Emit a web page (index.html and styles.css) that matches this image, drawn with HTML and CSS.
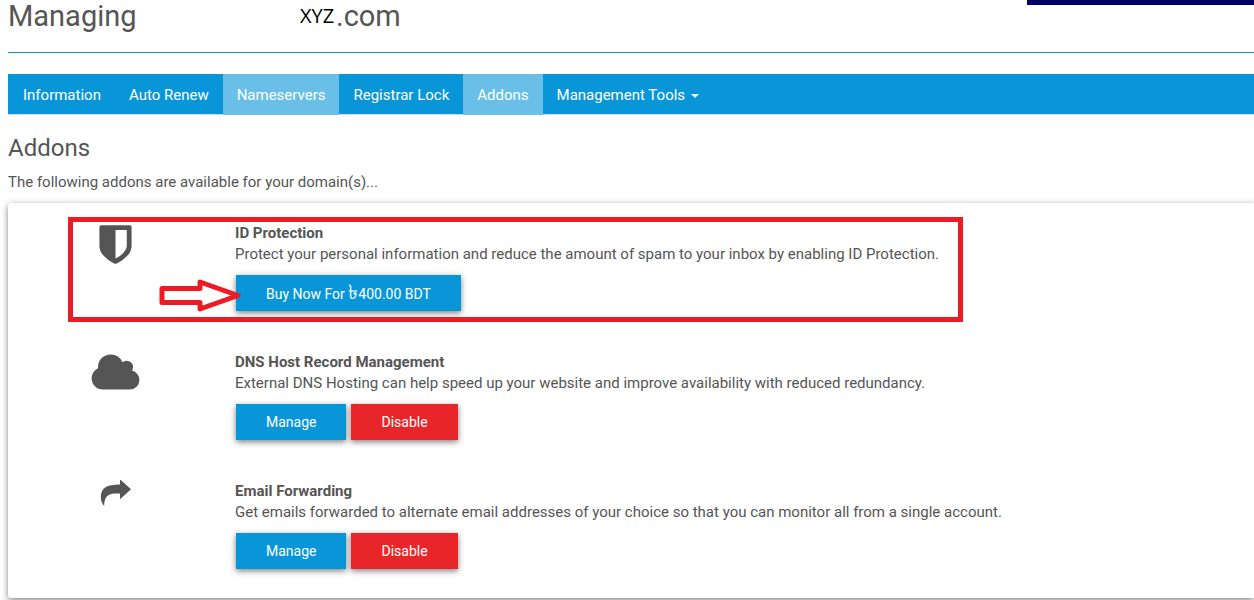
FILE: index.html
```html
<!DOCTYPE html>
<html lang="en">

<head>
    <meta charset="UTF-8">
    <meta name="viewport" content="width=device-width, initial-scale=1.0">
    <title>Domain Addons</title>
    <link rel="stylesheet" href="styles.css">
</head>

<body>
    <div class="strip"></div>
    <div class="page">
        <h1><span class="managing">Managing</span><span class="domain">XYZ</span><span>.com</span></h1>

        <nav class="tabs">
            <a href="#">Information</a>
            <a href="#">Auto Renew</a>
            <a href="#" class="current">Nameservers</a>
            <a href="#">Registrar Lock</a>
            <a href="#" class="current">Addons</a>
            <a href="#">Management Tools <span class="caret"></span></a>
        </nav>

        <h2>Addons</h2>
        <p class="intro">The following addons are available for your domain(s)...</p>

        <div class="card">
            <div class="addon">
                <div class="icon">
                    <svg width="45" height="45" viewBox="0 0 1792 1792">
                        <path d="M1344 960v-640h-448v1137q119-63 213-137 235-184 235-360zm192-768v768q0 86-33.5 170.5t-83 150-118 127.5-126.5 103-121 77.5-89.5 49.5-42.5 20q-12 6-26 6t-26-6q-16-7-42.5-20t-89.5-49.5-121-77.5-126.5-103-118-127.5-83-150-33.5-170.5v-768q0-26 19-45t45-19h1152q26 0 45 19t19 45z"/>
                    </svg>
                </div>
                <div class="info">
                    <h3>ID Protection</h3>
                    <p>Protect your personal information and reduce the amount of spam to your inbox by enabling ID Protection.</p>
                    <div class="buttons">
                        <button type="button" class="btn">Buy Now For <span class="taka">৳</span>400.00 BDT</button>
                    </div>
                </div>
                <!-- highlight frame and arrow -->
                <div class="frame"></div>
                <svg class="arrow" width="82" height="34" viewBox="0 0 82 34">
                    <path d="M3 9.500H41V3L79 16.500L41 30V23.500H3Z"/>
                </svg>
            </div>

            <div class="addon">
                <div class="icon">
                    <svg width="51" height="45" viewBox="0 0 2048 1792">
                        <path d="M1984 1152q0 159-112.500 271.500t-271.500 112.500h-1088q-185 0-316.500-131.500t-131.500-316.500q0-132 71-241.500t187-163.500q-2-28-2-43 0-212 150-362t362-150q158 0 286.500 88t187.500 230q70-62 166-62 106 0 181 75t75 181q0 75-41 138 129 30 213 134.500t84 239.500z"/>
                    </svg>
                </div>
                <div class="info">
                    <h3>DNS Host Record Management</h3>
                    <p>External DNS Hosting can help speed up your website and improve availability with reduced redundancy.</p>
                    <div class="buttons">
                        <button type="button" class="btn">Manage</button>
                        <button type="button" class="btn red">Disable</button>
                    </div>
                </div>
            </div>

            <div class="addon">
                <div class="icon">
                    <svg width="45" height="45" viewBox="0 8 45 45">
                        <path d="M27 7.300L38 17.300L27 27.300V21.500C19 21 15 22 12.700 26C11.500 28.500 11.200 31 11.200 34C9 31.500 7.800 28.500 7.800 25C8 16 14 12.500 27 12.600Z"/>
                    </svg>
                </div>
                <div class="info">
                    <h3>Email Forwarding</h3>
                    <p>Get emails forwarded to alternate email addresses of your choice so that you can monitor all from a single account.</p>
                    <div class="buttons">
                        <button type="button" class="btn">Manage</button>
                        <button type="button" class="btn red">Disable</button>
                    </div>
                </div>
            </div>
        </div>
    </div>
</body>

</html>
```
FILE: styles.css
```css
* {
    margin: 0;
    padding: 0;
    box-sizing: border-box;
}

body {
    font-family: Roboto, "Noto Sans", sans-serif;
    font-size: 15px;
    line-height: 21px;
    color: #555555;
    background-color: #ffffff;
}

.strip {
    position: absolute;
    top: 0;
    right: 0;
    width: 227px;
    height: 5px;
    background-color: #000066;
}

.page {
    padding: 0 0 2px 8px;
}

h1 {
    display: flex;
    align-items: baseline;
    height: 53px;
    line-height: 32px;
    font-size: 29px;
    font-weight: 400;
    border-bottom: 1px solid #0896d9;
}

.managing {
    width: 292px;
}

.domain {
    align-self: flex-start;
    width: 36px;
    font-family: "Open Sans", "Noto Sans", sans-serif;
    font-size: 20px;
    color: #000000;
}

.tabs {
    display: flex;
    height: 41px;
    margin-top: 21px;
    padding-left: 1px;
    background-color: #0896d9;
    border-bottom: 1px solid #dddddd;
}

.tabs a {
    height: 41px;
    padding: 0 14px;
    line-height: 42px;
    color: #ffffff;
    text-decoration: none;
}

.tabs .current {
    background-color: #69bfe7;
}

.caret {
    display: inline-block;
    margin-left: 2px;
    vertical-align: middle;
    border-top: 4px solid #ffffff;
    border-left: 4px solid transparent;
    border-right: 4px solid transparent;
}

h2 {
    margin-top: 20px;
    line-height: 26px;
    font-size: 24px;
    font-weight: 400;
}

.intro {
    margin-top: 11px;
}

.card {
    margin-top: 10px;
    padding-top: 20px;
    border-radius: 3px 0 0 3px;
    background-color: #ffffff;
    box-shadow: 0 2px 6px rgba(0, 0, 0, 0.5);
}

.addon {
    position: relative;
    display: grid;
    grid-template-columns: 216px 1fr;
    column-gap: 11px;
    padding-bottom: 41px;
}

.addon:last-child {
    padding-bottom: 29px;
}

.icon {
    padding-right: 2px;
}

.icon svg {
    display: block;
    margin: -1px auto 0;
    fill: #555555;
}

h3 {
    font-size: 15px;
    line-height: 21px;
    font-weight: 700;
}

.buttons {
    display: flex;
    gap: 5px;
    margin-top: 10px;
    padding-left: 1px;
}

.btn {
    height: 36px;
    padding: 0 30px;
    font-family: inherit;
    font-size: 14px;
    color: #ffffff;
    background-color: #0896d9;
    border: none;
    box-shadow: 0 2px 6px rgba(0, 0, 0, 0.5);
}

.taka {
    font-size: 20px;
    line-height: 14px;
}

.red {
    background-color: #e8262a;
}

.frame {
    position: absolute;
    top: -6px;
    left: 60px;
    width: 895px;
    height: 105px;
    border: 5px solid #ed1c24;
}

.arrow {
    position: absolute;
    top: 56px;
    left: 151px;
    fill: #ffffff;
    stroke: #ed1c24;
    stroke-width: 5px;
    stroke-linejoin: round;
}
```
